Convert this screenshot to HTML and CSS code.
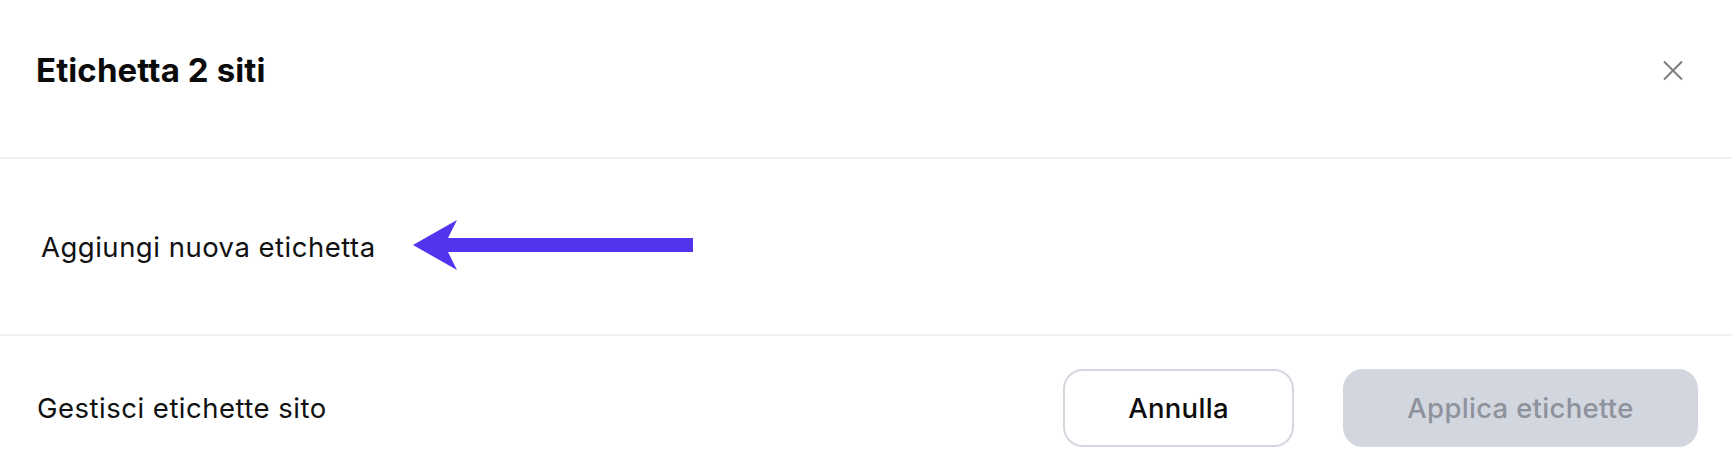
FILE: index.html
```html
<!DOCTYPE html>
<html lang="it">
<head>
<meta charset="utf-8">
<title>Etichetta 2 siti</title>
<link rel="stylesheet" href="styles.css">
</head>
<body>
<div class="modal">
  <header class="modal-header">
    <h1 class="modal-title">Etichetta 2 siti</h1>
    <button class="close-btn" aria-label="Chiudi">
      <svg width="20" height="21" viewBox="0 0 20 21" aria-hidden="true">
        <path d="M1 1.5 L19 19.5 M19 1.5 L1 19.5" stroke="#7e7e7e" stroke-width="2" fill="none" stroke-linecap="butt"/>
      </svg>
    </button>
  </header>
  <section class="modal-body">
    <span class="add-label">Aggiungi nuova etichetta</span>
    <svg class="arrow" width="282" height="52" viewBox="0 0 282 52" aria-hidden="true">
      <path d="M0 25 L44 0 L35 18 L280 18 L280 32 L35 32 L44 50 Z" fill="#5333ed"/>
    </svg>
  </section>
  <footer class="modal-footer">
    <span class="manage-label">Gestisci etichette sito</span>
    <div class="actions">
      <button class="btn btn-secondary">Annulla</button>
      <button class="btn btn-disabled" disabled>Applica etichette</button>
    </div>
  </footer>
</div>
</body>
</html>
```

FILE: styles.css
```css
html, body {
  margin: 0;
  padding: 0;
  background: #ffffff;
}

body {
  font-family: Inter, "Noto Sans", sans-serif;
  color: #0d0d0d;
  width: 1732px;
  height: 470px;
  overflow: hidden;
}

.modal {
  display: flex;
  flex-direction: column;
}

.modal-header {
  display: flex;
  align-items: center;
  justify-content: space-between;
  padding: 50px 49px 67px 36px;
  border-bottom: 2px solid #f1f1f1;
}

.modal-title {
  margin: 0;
  font-size: 33px;
  font-weight: 700;
  line-height: 40px;
  color: #0b0b0b;
  letter-spacing: 0.1px;
}

.close-btn {
  border: 0;
  background: none;
  padding: 0;
  width: 20px;
  height: 21px;
  display: flex;
  align-items: center;
  justify-content: center;
  cursor: pointer;
}

.modal-body {
  height: 175px;
  display: flex;
  align-items: center;
  gap: 37px;
  padding-left: 41px;
  border-bottom: 2px solid #f1f1f1;
}

.add-label {
  font-size: 27.5px;
  font-weight: 400;
  letter-spacing: 0.5px;
  color: #111111;
}

.arrow {
  display: block;
  margin-top: -1px;
}

.modal-footer {
  display: flex;
  align-items: center;
  justify-content: space-between;
  padding: 33px 34px 23px 37px;
}

.manage-label {
  font-size: 27.5px;
  font-weight: 400;
  letter-spacing: 0.5px;
  color: #111111;
}

.actions {
  display: flex;
  gap: 49px;
}

.btn {
  height: 78px;
  border-radius: 20px;
  font-family: Inter, "Noto Sans", sans-serif;
  font-size: 27.5px;
  font-weight: 500;
  letter-spacing: 0.3px;
  padding: 0 40px;
  box-sizing: border-box;
}

.btn-secondary {
  background: #ffffff;
  border: 2px solid #d3d7e0;
  color: #0d0d0d;
  width: 231px;
}

.btn-disabled {
  background: #d2d6df;
  border: 2px solid #d2d6df;
  color: #8e929c;
  width: 355px;
}
```
